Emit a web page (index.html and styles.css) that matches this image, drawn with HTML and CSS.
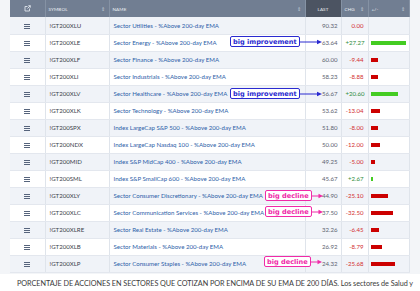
FILE: index.html
```html
<!DOCTYPE html>
<html>
<head>
<meta charset="utf-8">
<link rel="stylesheet" href="styles.css">
</head>
<body>
<div class="panel">
  <div class="tablewrap">
    <table class="grid">
      <colgroup>
        <col class="w-ico"><col class="w-sym"><col class="w-name"><col class="w-last"><col class="w-chg"><col class="w-bar">
      </colgroup>
      <thead>
        <tr>
          <th class="h-ico"><svg width="7" height="7" viewBox="0 0 7 7"><path d="M1 1.5h2.5M1 1.5v4.5h4.5V3.5" fill="none" stroke="#dfe4ec" stroke-width="0.9"/><path d="M3.5 3.5L6.3 0.7M4.3 0.7h2v2" fill="none" stroke="#dfe4ec" stroke-width="0.9"/></svg></th>
          <th class="h-left">SYMBOL<span class="sort">&#8661;</span></th>
          <th class="h-left">NAME<span class="sort">&#8661;</span></th>
          <th class="h-last">LAST</th>
          <th class="h-left">CHG<span class="sort">&#8661;</span></th>
          <th class="h-left">+/-<span class="sort">&#8661;</span></th>
        </tr>
      </thead>
      <tbody>
        <tr><td class="ico"><span class="burger"></span></td><td class="sym">!GT200XLU</td><td class="name">Sector Utilities - %Above 200-day EMA</td><td class="last">90.32</td><td class="chg neg">0.00</td><td class="bar"></td></tr>
        <tr><td class="ico"><span class="burger"></span></td><td class="sym">!GT200XLE</td><td class="name">Sector Energy - %Above 200-day EMA</td><td class="last">63.64</td><td class="chg pos">+27.27</td><td class="bar"><span class="b up" style="width:35px"></span></td></tr>
        <tr><td class="ico"><span class="burger"></span></td><td class="sym">!GT200XLF</td><td class="name">Sector Finance - %Above 200-day EMA</td><td class="last">60.00</td><td class="chg neg">-9.44</td><td class="bar"><span class="b dn" style="width:7px"></span></td></tr>
        <tr><td class="ico"><span class="burger"></span></td><td class="sym">!GT200XLI</td><td class="name">Sector Industrials - %Above 200-day EMA</td><td class="last">58.23</td><td class="chg neg">-8.88</td><td class="bar"><span class="b dn" style="width:7px"></span></td></tr>
        <tr><td class="ico"><span class="burger"></span></td><td class="sym">!GT200XLV</td><td class="name">Sector Healthcare - %Above 200-day EMA</td><td class="last">56.67</td><td class="chg pos">+20.60</td><td class="bar"><span class="b up" style="width:27px"></span></td></tr>
        <tr><td class="ico"><span class="burger"></span></td><td class="sym">!GT200XLK</td><td class="name">Sector Technology - %Above 200-day EMA</td><td class="last">53.62</td><td class="chg neg">-13.04</td><td class="bar"><span class="b dn" style="width:9px"></span></td></tr>
        <tr><td class="ico"><span class="burger"></span></td><td class="sym">!GT200SPX</td><td class="name">Index LargeCap S&amp;P 500 - %Above 200-day EMA</td><td class="last">51.80</td><td class="chg neg">-8.00</td><td class="bar"><span class="b dn" style="width:7px"></span></td></tr>
        <tr><td class="ico"><span class="burger"></span></td><td class="sym">!GT200NDX</td><td class="name">Index LargeCap Nasdaq 100 - %Above 200-day EMA</td><td class="last">50.00</td><td class="chg neg">-12.00</td><td class="bar"><span class="b dn" style="width:9px"></span></td></tr>
        <tr><td class="ico"><span class="burger"></span></td><td class="sym">!GT200MID</td><td class="name">Index S&amp;P MidCap 400 - %Above 200-day EMA</td><td class="last">49.25</td><td class="chg neg">-5.00</td><td class="bar"><span class="b dn" style="width:4px"></span></td></tr>
        <tr><td class="ico"><span class="burger"></span></td><td class="sym">!GT200SML</td><td class="name">Index S&amp;P SmallCap 600 - %Above 200-day EMA</td><td class="last">45.67</td><td class="chg pos">+2.67</td><td class="bar"><span class="b up" style="width:2px"></span></td></tr>
        <tr><td class="ico"><span class="burger"></span></td><td class="sym">!GT200XLY</td><td class="name">Sector Consumer Discretionary - %Above 200-day EMA</td><td class="last">44.90</td><td class="chg neg">-25.10</td><td class="bar"><span class="b dn" style="width:17px"></span></td></tr>
        <tr><td class="ico"><span class="burger"></span></td><td class="sym">!GT200XLC</td><td class="name">Sector Communication Services - %Above 200-day EMA</td><td class="last">37.50</td><td class="chg neg">-32.50</td><td class="bar"><span class="b dn" style="width:22px"></span></td></tr>
        <tr><td class="ico"><span class="burger"></span></td><td class="sym">!GT200XLRE</td><td class="name">Sector Real Estate - %Above 200-day EMA</td><td class="last">32.26</td><td class="chg neg">-6.45</td><td class="bar"><span class="b dn" style="width:8px"></span></td></tr>
        <tr><td class="ico"><span class="burger"></span></td><td class="sym">!GT200XLB</td><td class="name">Sector Materials - %Above 200-day EMA</td><td class="last">26.92</td><td class="chg neg">-8.79</td><td class="bar"><span class="b dn" style="width:11px"></span></td></tr>
        <tr><td class="ico"><span class="burger"></span></td><td class="sym">!GT200XLP</td><td class="name">Sector Consumer Staples - %Above 200-day EMA</td><td class="last">24.32</td><td class="chg neg">-25.68</td><td class="bar"><span class="b dn" style="width:24px"></span></td></tr>
      </tbody>
    </table>

    <div class="note blue n-xle"><span class="tag">big improvement</span><svg class="arr" width="23" height="6" viewBox="0 0 23 6"><path d="M0 3H19" stroke="#2a2ad0" stroke-width="1"/><path d="M17 0.8L22 3L17 5.2Z" fill="#2a2ad0"/></svg></div>
    <div class="note blue n-xlv"><span class="tag">big improvement</span><svg class="arr" width="23" height="6" viewBox="0 0 23 6"><path d="M0 3H19" stroke="#2a2ad0" stroke-width="1"/><path d="M17 0.8L22 3L17 5.2Z" fill="#2a2ad0"/></svg></div>
    <div class="note pink n-xly"><span class="tag">big decline</span><svg class="arr" width="12" height="6" viewBox="0 0 12 6"><path d="M0 3H8" stroke="#f02aa8" stroke-width="1"/><path d="M6.5 0.8L11 3L6.5 5.2Z" fill="#f02aa8"/></svg></div>
    <div class="note pink n-xlc"><span class="tag">big decline</span><svg class="arr" width="12" height="6" viewBox="0 0 12 6"><path d="M0 3H8" stroke="#f02aa8" stroke-width="1"/><path d="M6.5 0.8L11 3L6.5 5.2Z" fill="#f02aa8"/></svg></div>
    <div class="note pink n-xlp"><span class="tag">big decline</span><svg class="arr" width="12" height="6" viewBox="0 0 12 6"><path d="M0 3H8" stroke="#f02aa8" stroke-width="1"/><path d="M6.5 0.8L11 3L6.5 5.2Z" fill="#f02aa8"/></svg></div>
  </div>
</div>
<p class="caption">PORCENTAJE DE ACCIONES EN SECTORES QUE COTIZAN POR ENCIMA DE SU EMA DE 200 DÍAS. Los sectores de Salud y</p>
</body>
</html>
```

FILE: styles.css
```css
html, body {
  margin: 0;
  padding: 0;
  background: #ffffff;
  font-family: Lato, "Open Sans", sans-serif;
  overflow: hidden;
}

.panel {
  background: #f3f5f8;
  padding: 0 11px 1px 10px;
}

.tablewrap {
  position: relative;
  width: 399px;
}

.grid {
  border-collapse: collapse;
  table-layout: fixed;
  width: 399px;
  background: #ffffff;
}

.w-ico { width: 35px; }
.w-sym { width: 64px; }
.w-name { width: 196px; }
.w-last { width: 36px; }
.w-chg { width: 27px; }
.w-bar { width: 41px; }

.grid thead tr { height: 17px; }
.grid th {
  background: #717e92;
  color: #eef1f5;
  font-size: 4.6px;
  font-weight: 400;
  text-transform: uppercase;
  padding: 0 3px;
  text-align: left;
  border-right: 1px solid #8592a4;
  white-space: nowrap;
  letter-spacing: 0.1px;
}
.grid th.h-ico { text-align: center; padding: 0; }
.grid th.h-ico svg { display: block; margin: 0 auto; }
.grid th.h-last {
  background: #4c5462;
  text-align: center;
}
.grid th .sort {
  float: right;
  color: #c3cad6;
  font-size: 5px;
}

.grid tbody tr { height: 17px; }
.grid tbody tr:nth-child(odd) td { background: #f0f3f8; }
.grid td {
  padding: 0 4px;
  font-size: 6.1px;
  color: #444a55;
  border-right: 1px solid #dfe4eb;
  border-bottom: 1px solid #e3e7ee;
  white-space: nowrap;
  overflow: hidden;
}
.grid td.ico { text-align: center; padding: 0; }
.burger {
  display: inline-block;
  width: 6px;
  height: 1px;
  background: #56647c;
  box-shadow: 0 2px 0 #56647c, 0 -2px 0 #56647c;
  vertical-align: middle;
}
.grid td.sym { color: #3b414b; padding-left: 4px; }
.grid td.name { color: #2d5ea8; padding-left: 4px; }
.grid td.last { text-align: right; color: #5c6370; padding-right: 3px; }
.grid td.chg { text-align: right; padding-right: 4px; }
.grid td.chg.neg { color: #d32f2f; }
.grid td.chg.pos { color: #2e8b3a; }
.grid td.bar { padding: 0 2px; }
.b {
  display: block;
  height: 4px;
}
.b.up { background: #44cc22; }
.b.dn { background: #cc0000; }

.note {
  position: absolute;
  display: flex;
  align-items: center;
  height: 11px;
}
.note .tag {
  box-sizing: border-box;
  height: 11px;
  display: flex;
  align-items: center;
  padding: 0 2px;
  background: #ffffff;
  border-radius: 2px;
  font-family: "DejaVu Sans", sans-serif;
  font-weight: 700;
  font-size: 6.6px;
  white-space: nowrap;
}
.note .arr { display: block; }
.note.blue .tag { border: 1px solid #2a2ad0; color: #2a2ad0; }
.note.pink .tag { border: 1px solid #f02aa8; color: #f02aa8; }

.n-xle { left: 220px; top: 36px; }
.n-xlv { left: 220px; top: 88px; }
.n-xly { left: 255px; top: 190px; }
.n-xlc { left: 255px; top: 206px; }
.n-xlp { left: 254px; top: 256px; }

.caption {
  margin: 5px 0 0 17px;
  font-size: 7.25px;
  color: #3a3a3a;
  white-space: nowrap;
  letter-spacing: -0.05px;
}
```
